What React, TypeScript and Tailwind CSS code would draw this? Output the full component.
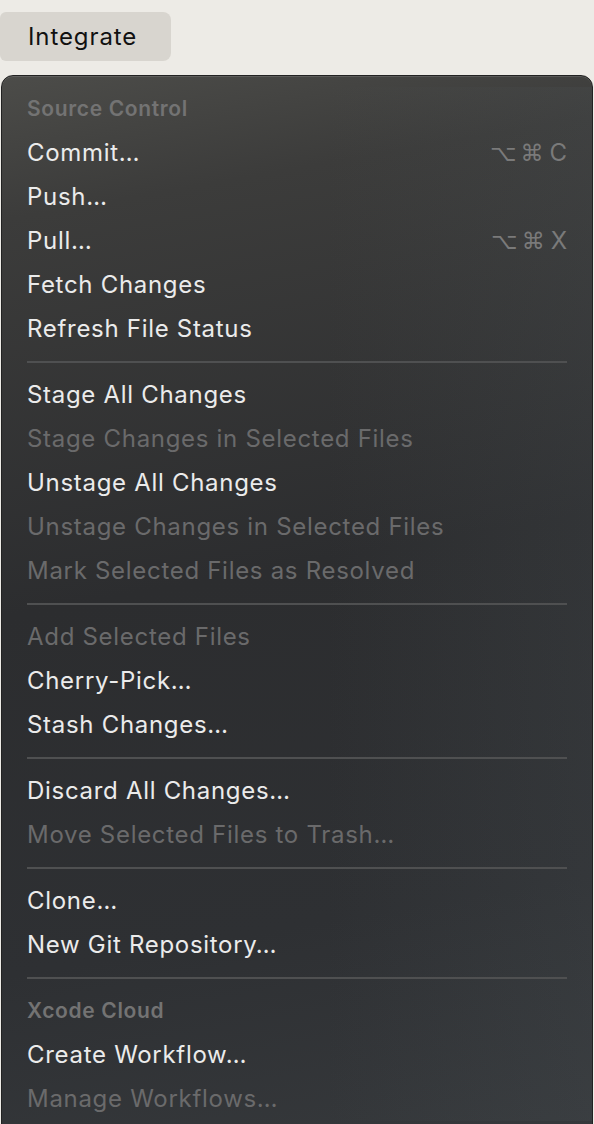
import React from "react";

type Item =
  | { kind: "header"; label: string }
  | { kind: "sep" }
  | { kind: "item"; label: string; disabled?: boolean; shortcut?: string };

const items: Item[] = [
  { kind: "header", label: "Source Control" },
  { kind: "item", label: "Commit…", shortcut: "⌥⌘C" },
  { kind: "item", label: "Push…" },
  { kind: "item", label: "Pull…", shortcut: "⌥⌘X" },
  { kind: "item", label: "Fetch Changes" },
  { kind: "item", label: "Refresh File Status" },
  { kind: "sep" },
  { kind: "item", label: "Stage All Changes" },
  { kind: "item", label: "Stage Changes in Selected Files", disabled: true },
  { kind: "item", label: "Unstage All Changes" },
  { kind: "item", label: "Unstage Changes in Selected Files", disabled: true },
  { kind: "item", label: "Mark Selected Files as Resolved", disabled: true },
  { kind: "sep" },
  { kind: "item", label: "Add Selected Files", disabled: true },
  { kind: "item", label: "Cherry-Pick…" },
  { kind: "item", label: "Stash Changes…" },
  { kind: "sep" },
  { kind: "item", label: "Discard All Changes…" },
  { kind: "item", label: "Move Selected Files to Trash…", disabled: true },
  { kind: "sep" },
  { kind: "item", label: "Clone…" },
  { kind: "item", label: "New Git Repository…" },
  { kind: "sep" },
  { kind: "header", label: "Xcode Cloud" },
  { kind: "item", label: "Create Workflow…" },
  { kind: "item", label: "Manage Workflows…", disabled: true },
];

function Shortcut({ text }: { text: string }) {
  const chars = Array.from(text);
  return (
    <span className="flex items-center gap-[4px] text-[#7a7a7a] font-['DejaVu_Sans',sans-serif] tracking-normal">
      {chars.map((c, i) => (
        <span
          key={i}
          className={
            i === chars.length - 1
              ? "font-['Inter',sans-serif] text-[24px] ml-[2px]"
              : "text-[23px]"
          }
        >
          {c}
        </span>
      ))}
    </span>
  );
}

export default function App() {
  return (
    <div className="w-[594px] h-[1124px] overflow-hidden bg-[#edebe6] font-['Inter',sans-serif] relative">
      <div className="pt-[12px]">
        <div className="w-[171px] h-[49px] rounded-r-[8px] rounded-l-[6px] bg-[#d8d5cf] flex items-center pl-[28px] text-[24px] text-[#111] tracking-[0.9px]">
          Integrate
        </div>
      </div>
      <div className="mt-[14px] ml-[1px] w-[592px] rounded-t-[12px] border border-[#222] shadow-[inset_0_1px_0_rgba(255,255,255,0.12)] bg-[linear-gradient(170deg,#4c4c49_0%,#3c3c3b_12%,#2c2d2f_45%,#2e3033_75%,#373a3d_100%)] pt-[11px] pb-[40px] min-h-[1100px]">
        <div className="bg-[linear-gradient(90deg,rgba(0,0,0,0)_0%,rgba(0,0,0,0)_55%,rgba(80,88,92,0.18)_100%)]">
          {items.map((it, i) => {
            if (it.kind === "sep") {
              return (
                <div key={i} className="h-[22px] flex items-center px-[25px]">
                  <div className="h-[2px] w-full bg-[#4f5051]" />
                </div>
              );
            }
            if (it.kind === "header") {
              return (
                <div
                  key={i}
                  className="h-[44px] flex items-center px-[25px] text-[21px] font-semibold text-[#737373] tracking-[0.65px]"
                >
                  {it.label}
                </div>
              );
            }
            return (
              <div
                key={i}
                className={`h-[44px] flex items-center justify-between pl-[25px] pr-[25px] text-[24px] tracking-[0.7px] ${
                  it.disabled ? "text-[#6a6a6b]" : "text-[#ebebeb]"
                }`}
              >
                <span>{it.label}</span>
                {it.shortcut && <Shortcut text={it.shortcut} />}
              </div>
            );
          })}
        </div>
      </div>
    </div>
  );
}
